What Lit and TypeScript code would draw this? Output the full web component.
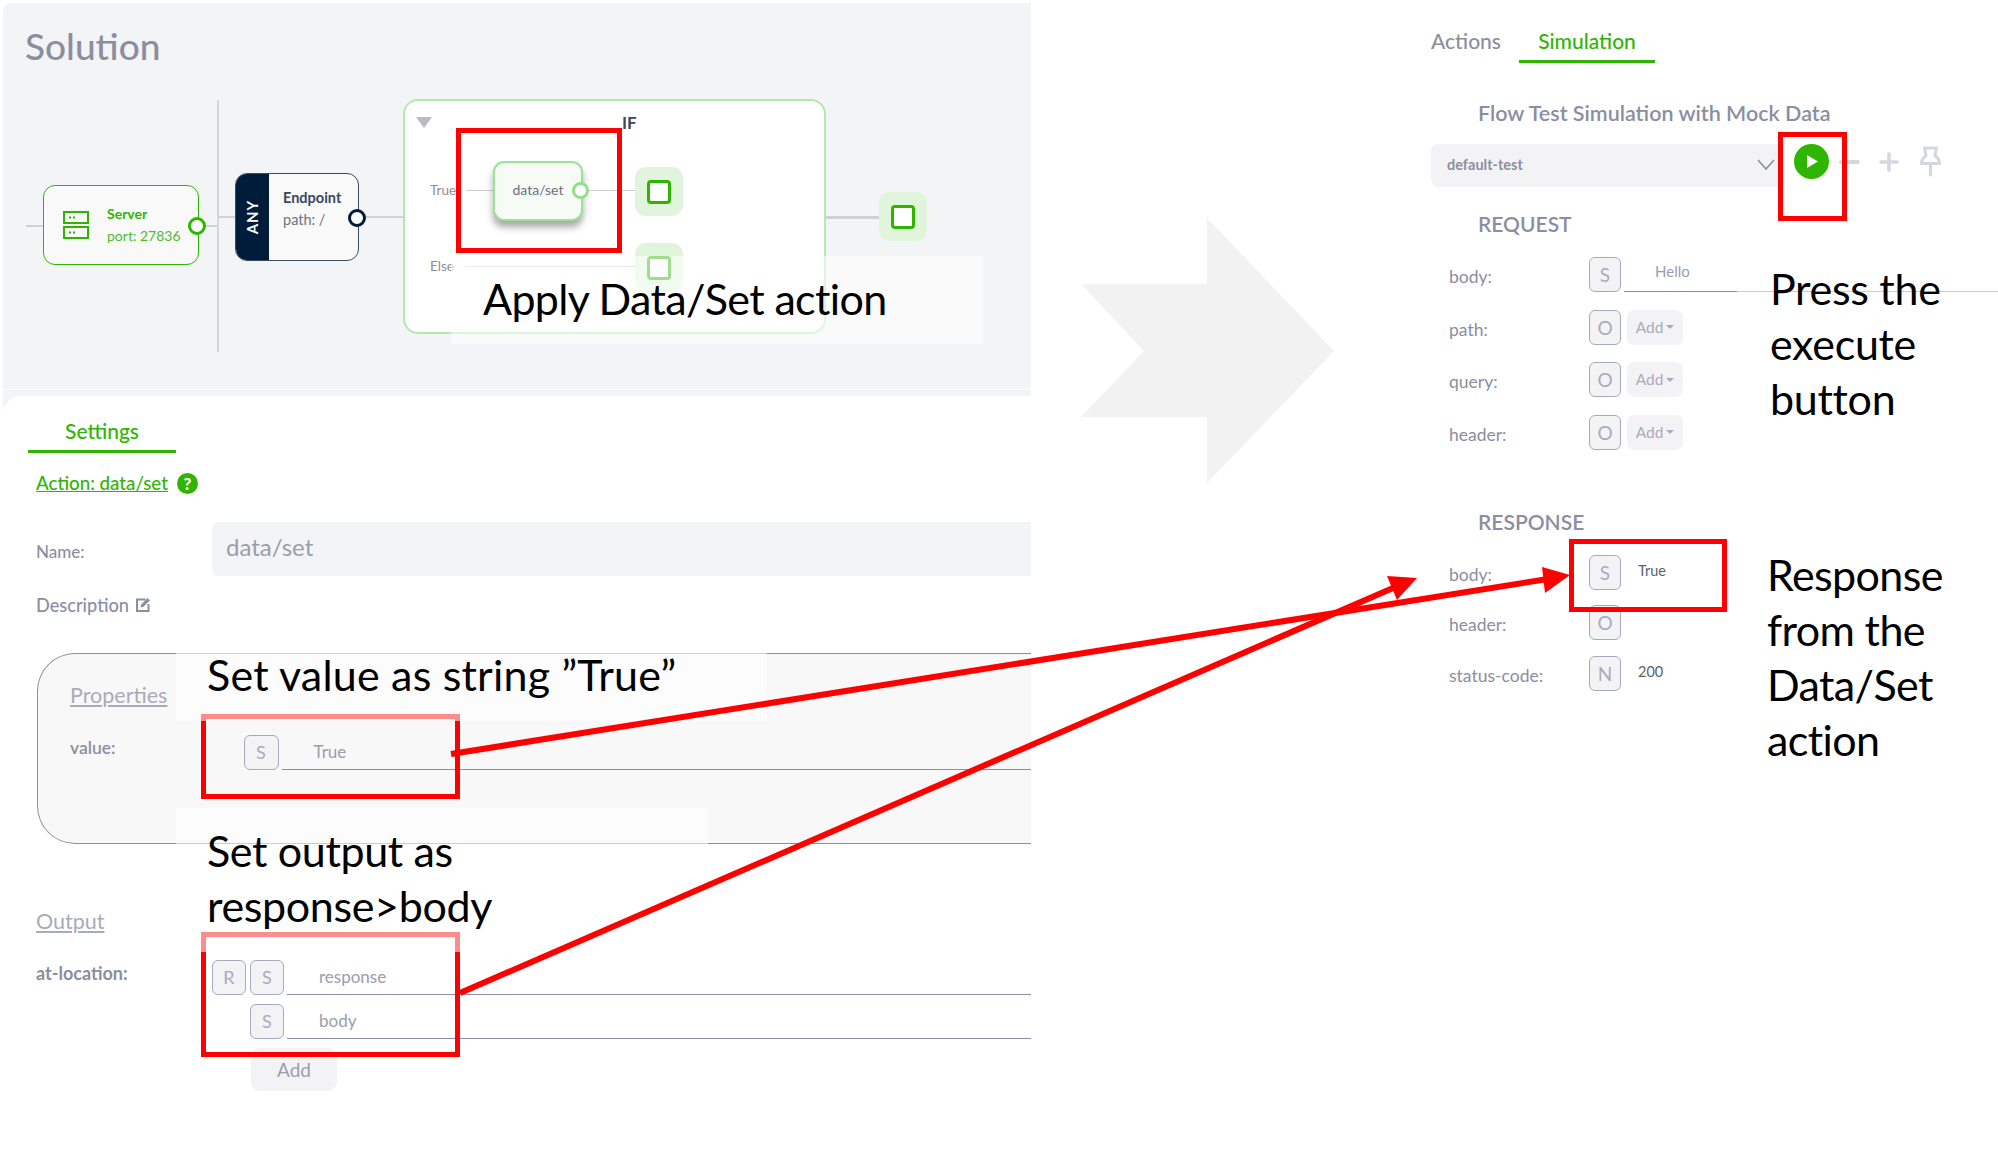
import { LitElement, html, css } from "lit";
import { customElement } from "lit/decorators.js";
import { styleMap } from "lit/directives/style-map.js";

type Box = { x: number; y: number; w: number; h: number };
type Note = { x: number; y: number; spacing: number; lines: string[] };

const at = (x: number, y: number) => styleMap({ left: `${x}px`, top: `${y}px` });
const box = (b: Box) =>
  styleMap({ left: `${b.x}px`, top: `${b.y}px`, width: `${b.w}px`, height: `${b.h}px` });

// canvas coordinates, relative to the flow canvas
const WIRES: Box[] = [
  { x: 23, y: 222, w: 20, h: 2 },
  { x: 196, y: 222, w: 19, h: 2 },
  { x: 214, y: 213, w: 20, h: 2 },
  { x: 358, y: 213, w: 43, h: 2 },
  { x: 823, y: 213, w: 53, h: 3 },
  { x: 463, y: 187, w: 28, h: 1 },
  { x: 580, y: 187, w: 53, h: 1 },
  { x: 462, y: 263, w: 171, h: 1 },
];
const SINKS = [
  { x: 632, y: 164 },
  { x: 632, y: 240 },
  { x: 876, y: 189 },
];

// annotations drawn over the screenshot, page coordinates
const RED_BOXES: Box[] = [
  { x: 456, y: 128, w: 166, h: 125 },
  { x: 201, y: 714, w: 259, h: 85 },
  { x: 201, y: 932, w: 259, h: 125 },
  { x: 1778, y: 132, w: 69, h: 89 },
  { x: 1569, y: 539, w: 158, h: 73 },
];
const VEILS: Box[] = [
  { x: 451, y: 256, w: 532, h: 88 },
  { x: 176, y: 653, w: 591, h: 68 },
  { x: 176, y: 808, w: 532, h: 144 },
  { x: 1737, y: 262, w: 261, h: 170 },
];
const NOTES: Note[] = [
  { x: 483, y: 271, spacing: -0.65, lines: ["Apply Data/Set action"] },
  { x: 207, y: 647, spacing: 0.2, lines: ["Set value as string ”True”"] },
  { x: 207, y: 823, spacing: -0.35, lines: ["Set output as", "response>body"] },
  { x: 1770, y: 261, spacing: -0.3, lines: ["Press the", "execute", "button"] },
  { x: 1767, y: 547, spacing: -0.6, lines: ["Response", "from the", "Data/Set", "action"] },
];

@customElement("flow-canvas")
class FlowCanvas extends LitElement {
  static styles = css`
    :host {
      display: block;
      position: relative;
      height: 386px;
      border-bottom: 1px solid #fbfbfc;
      font-family: Lato, sans-serif;
    }
    .title {
      position: absolute;
      left: 22px;
      top: 22px;
      font-size: 37px;
      line-height: 42px;
      font-weight: 500;
      color: #8b8e9f;
    }
    .wire {
      position: absolute;
      background: #cfd1d5;
    }
    .vline {
      position: absolute;
      left: 214px;
      top: 97px;
      width: 2px;
      height: 252px;
      background: #d5d6da;
    }
    .server {
      position: absolute;
      left: 40px;
      top: 182px;
      width: 156px;
      height: 80px;
      box-sizing: border-box;
      border: 1.5px solid #2fb500;
      border-radius: 12px;
      background: #f8f9f8;
      display: flex;
      align-items: center;
      gap: 18px;
      padding-left: 19px;
      color: #2fb500;
      font-size: 14px;
      line-height: 22px;
    }
    .server b {
      display: block;
      font-weight: 700;
    }
    .server span {
      opacity: 0.85;
    }
    .port {
      position: absolute;
      width: 12px;
      height: 12px;
      border-radius: 50%;
      background: #fff;
      border: 3px solid #2fb500;
    }
    .port.dark {
      border-color: #001c3b;
    }
    .port.light {
      width: 11px;
      height: 11px;
      border-color: #8fe087;
    }
    .endpoint {
      position: absolute;
      left: 232px;
      top: 170px;
      width: 124px;
      height: 88px;
      box-sizing: border-box;
      border: 1.5px solid #3a4a63;
      border-radius: 12px;
      background: #f8f9f8;
      display: flex;
      overflow: hidden;
      color: #3a4760;
      font-size: 14.5px;
      line-height: 22px;
    }
    .any {
      width: 33px;
      background: #001c3b;
      color: #fff;
      font-size: 15px;
      font-weight: 700;
      letter-spacing: 1px;
      display: flex;
      align-items: center;
      justify-content: center;
    }
    .any span {
      transform: rotate(-90deg);
    }
    .endpoint .info {
      padding: 13px 0 0 14px;
    }
    .endpoint b {
      display: block;
    }
    .endpoint .p {
      color: #6b7486;
    }
    .if-box {
      position: absolute;
      left: 400px;
      top: 96px;
      width: 423px;
      height: 235px;
      box-sizing: border-box;
      border: 2px solid #b3e9ad;
      border-radius: 15px;
      background: #fff;
    }
    .tri {
      position: absolute;
      left: 413px;
      top: 114px;
      width: 0;
      height: 0;
      border-left: 8px solid transparent;
      border-right: 8px solid transparent;
      border-top: 11px solid #b9bbc4;
    }
    .if-label {
      position: absolute;
      left: 619px;
      top: 110px;
      font-size: 17px;
      line-height: 20px;
      font-weight: 700;
      color: #3a4760;
    }
    .side {
      position: absolute;
      left: 427px;
      font-size: 13.5px;
      line-height: 16px;
      color: #8a8d9b;
    }
    .action {
      position: absolute;
      left: 490px;
      top: 158px;
      width: 90px;
      height: 60px;
      box-sizing: border-box;
      border: 2px solid #9be295;
      border-radius: 11px;
      background: #f6fbf5;
      box-shadow: 0 6px 7px rgba(60, 60, 60, 0.45);
      display: flex;
      align-items: center;
      justify-content: center;
      padding-bottom: 3px;
      font-size: 14px;
      color: #6c7080;
    }
    .sink {
      position: absolute;
      width: 48px;
      height: 49px;
      border-radius: 11px;
      background: #e1f5dd;
      display: flex;
      align-items: center;
      justify-content: center;
    }
    .sink i {
      display: block;
      width: 18px;
      height: 18px;
      border: 3px solid #2fb500;
      border-radius: 4px;
      background: #fff;
    }
  `;

  render() {
    return html`
      <div class="title">Solution</div>
      ${WIRES.slice(0, 5).map((w) => html`<div class="wire" style=${box(w)}></div>`)}
      <div class="vline"></div>

      <div class="server">
        <svg width="26" height="28" viewBox="0 0 26 28" fill="none" stroke="#2fb500" stroke-width="2">
          <rect x="1" y="1" width="24" height="11" />
          <rect x="1" y="16" width="24" height="11" />
          <path d="M6 6.500h2M10 6.500h2M6 21.500h2M10 21.500h2" />
        </svg>
        <div><b>Server</b><span>port: 27836</span></div>
      </div>
      <div class="port" style=${at(185, 214)}></div>

      <div class="endpoint">
        <div class="any"><span>ANY</span></div>
        <div class="info"><b>Endpoint</b><span class="p">path: /</span></div>
      </div>
      <div class="port dark" style=${at(345, 206)}></div>

      <div class="if-box"></div>
      <div class="tri"></div>
      <div class="if-label">IF</div>
      <div class="side" style=${at(427, 179)}>True</div>
      <div class="side" style=${at(427, 255)}>Else</div>
      ${WIRES.slice(5).map((w) => html`<div class="wire" style=${box(w)}></div>`)}
      <div class="action">data/set</div>
      <div class="port light" style=${at(569, 179)}></div>
      ${SINKS.map((s) => html`<div class="sink" style=${at(s.x, s.y)}><i></i></div>`)}
    `;
  }
}

@customElement("settings-panel")
class SettingsPanel extends LitElement {
  static styles = css`
    :host {
      display: block;
      height: 759px;
      margin-top: 6px;
      background: #fff;
      border-radius: 18px 0 0 0;
      font-family: Lato, sans-serif;
      color: #8b8e9f;
      font-size: 17px;
    }
    .tab {
      width: 148px;
      margin-left: 25px;
      padding-top: 20px;
      box-sizing: border-box;
      height: 57px;
      border-bottom: 3px solid #2fb500;
      text-align: center;
      color: #2fb500;
      font-size: 21px;
      line-height: 29px;
      font-weight: 500;
    }
    .action {
      margin: 18px 0 0 33px;
      display: flex;
      align-items: center;
      gap: 9px;
      height: 24px;
    }
    .action u {
      color: #2fb500;
      font-size: 18.700px;
      font-weight: 500;
    }
    .help {
      width: 21px;
      height: 21px;
      border-radius: 50%;
      background: #2fb500;
      color: #fff;
      font-size: 17px;
      font-weight: 900;
      line-height: 21px;
      text-align: center;
    }
    .name {
      display: flex;
      align-items: center;
      margin: 27px 0 0 33px;
    }
    .name label {
      width: 176px;
      padding-top: 4px;
      font-weight: 500;
    }
    .input {
      flex: 1;
      height: 54px;
      border-radius: 6px 0 0 6px;
      background: #f3f4f6;
      color: #9a9dad;
      font-size: 24px;
      line-height: 50px;
      padding-left: 14px;
    }
    .desc {
      margin: 17px 0 0 33px;
      display: flex;
      gap: 6px;
      height: 24px;
      align-items: center;
      font-size: 18.200px;
      font-weight: 500;
    }
    .props {
      margin: 36px 0 0 34px;
      height: 191px;
      box-sizing: border-box;
      border: 1.5px solid #8b8ea6;
      border-right: 0;
      border-radius: 38px 0 0 38px;
      background: #f8f8f9;
      padding: 28px 0 0 32px;
    }
    .link {
      display: block;
      width: max-content;
      font-size: 21.500px;
      line-height: 26px;
      color: #a9abbb;
      text-decoration: underline;
    }
    .value {
      display: flex;
      margin-top: 27px;
    }
    .value label {
      width: 173.500px;
      line-height: 26px;
      font-weight: 600;
      font-size: 17.500px;
    }
    .field {
      flex: 1;
      height: 35px;
      box-sizing: border-box;
      border-bottom: 1.5px solid #8b8ea6;
      margin-left: 3px;
      padding-left: 32px;
      line-height: 33px;
      color: #9a9dad;
      font-size: 17px;
    }
    .type {
      flex: none;
      box-sizing: border-box;
      width: 35px;
      height: 35px;
      border: 1.5px solid #a7aabd;
      border-radius: 6px;
      background: #f3f3f6;
      color: #a9abbb;
      font-size: 18px;
      line-height: 33px;
      text-align: center;
    }
    .output {
      margin: 64px 0 0 33px;
      height: 28px;
    }
    .loc {
      display: grid;
      grid-template-columns: 176px 38px 1fr;
      grid-auto-rows: 35px;
      row-gap: 9px;
      margin: 24px 0 0 33px;
    }
    .loc label {
      font-weight: 700;
      font-size: 18px;
      color: #8b8e9f;
      line-height: 26px;
    }
    .loc .first {
      grid-column: 2;
      width: 34px;
    }
    .cell {
      display: flex;
      grid-column: 3;
    }
    .cell .type {
      width: 34px;
    }
    .spacer {
      grid-column: 1 / 3;
    }
    .add {
      margin: 9px 0 0 248px;
      width: 86px;
      height: 43px;
      border-radius: 9px;
      background: #f3f3f6;
      color: #9a9dad;
      font-size: 19px;
      line-height: 43px;
      text-align: center;
    }
  `;

  render() {
    return html`
      <div class="tab">Settings</div>
      <div class="action"><u>Action: data/set</u><span class="help">?</span></div>
      <div class="name">
        <label>Name:</label>
        <div class="input">data/set</div>
      </div>
      <div class="desc">
        Description
        <svg width="16" height="16" viewBox="0 0 16 16" fill="none">
          <path d="M10.500 2.500H2v11.500h11.500V7" stroke="#8b8e9f" stroke-width="2" />
          <path d="M5.500 10.500l.7-3L12.500 1l2.500 2.500-6.500 6.300z" fill="#8b8e9f" />
        </svg>
      </div>
      <div class="props">
        <span class="link">Properties</span>
        <div class="value">
          <label>value:</label>
          <div class="type">S</div>
          <div class="field">True</div>
        </div>
      </div>
      <div class="output"><span class="link">Output</span></div>
      <div class="loc">
        <label>at-location:</label>
        <div class="type first">R</div>
        <div class="cell"><div class="type">S</div><div class="field">response</div></div>
        <div class="spacer"></div>
        <div class="cell"><div class="type">S</div><div class="field">body</div></div>
      </div>
      <div class="add">Add</div>
    `;
  }
}

@customElement("simulation-panel")
class SimulationPanel extends LitElement {
  static styles = css`
    :host {
      display: block;
      font-family: Lato, sans-serif;
      color: #8b8e9f;
      font-size: 17px;
    }
    .tabs {
      display: flex;
      height: 63px;
      box-sizing: border-box;
    }
    .tab {
      padding-top: 26px;
      font-size: 21px;
      line-height: 29px;
      font-weight: 500;
    }
    .tab.on {
      margin-left: 18px;
      width: 136px;
      text-align: center;
      color: #2fb500;
      border-bottom: 3px solid #2fb500;
      box-sizing: border-box;
    }
    h2 {
      margin: 36px 0 0 47px;
      font-size: 21.500px;
      line-height: 28px;
      font-weight: 600;
      color: #8b8e9f;
    }
    .bar {
      display: flex;
      align-items: center;
      margin-top: 17px;
      height: 43px;
    }
    .select {
      width: 347px;
      height: 43px;
      box-sizing: border-box;
      border-radius: 8px 0 0 8px;
      background: #f3f3f6;
      display: flex;
      align-items: center;
      justify-content: space-between;
      padding: 0 3px 2px 16px;
      font-size: 14.500px;
      font-weight: 700;
    }
    .tools {
      display: flex;
      align-items: center;
      margin-top: -8px;
    }
    .play {
      margin-left: 16px;
      width: 35px;
      height: 35px;
    }
    .minus {
      margin-left: 10px;
    }
    .plus {
      margin-left: 19px;
    }
    .pin {
      margin-left: 21px;
    }
    h3 {
      margin: 23px 0 0 47px;
      font-size: 21px;
      line-height: 28px;
      font-weight: 600;
      color: #8b8e9f;
    }
    h3.response {
      margin-top: 58px;
    }
    .rows {
      display: grid;
      grid-template-columns: 140px 1fr;
      margin: 19px 0 0 18px;
    }
    .row-label {
      line-height: 26px;
      padding-top: 7px;
      font-size: 17.500px;
    }
    .row {
      display: flex;
      align-items: flex-start;
    }
    .type {
      flex: none;
      box-sizing: border-box;
      width: 32px;
      height: 35px;
      border: 1.5px solid #a7aabd;
      border-radius: 6px;
      background: #f3f3f6;
      color: #a9abbb;
      font-size: 19px;
      line-height: 33px;
      text-align: center;
    }
    .hello {
      flex: 1;
      height: 35px;
      margin-left: 3px;
      box-sizing: border-box;
      border-bottom: 1.5px solid #8b8ea6;
      padding-left: 31px;
      color: #9a9dad;
      font-size: 15px;
      line-height: 29px;
    }
    .add {
      margin-left: 6px;
      width: 56px;
      height: 35px;
      border-radius: 7px;
      background: #f3f3f6;
      color: #a9abbb;
      font-size: 15.500px;
      line-height: 35px;
      display: flex;
      align-items: center;
      justify-content: center;
      gap: 3px;
    }
    .add i {
      width: 0;
      height: 0;
      border-left: 4px solid transparent;
      border-right: 4px solid transparent;
      border-top: 4px solid #a9abbb;
    }
    .val {
      margin-left: 17px;
      color: #5d5f68;
      font-size: 14.500px;
      line-height: 31px;
    }
    .gap {
      grid-column: 1 / 3;
      height: 17.500px;
    }
    .gap.sm {
      height: 15.500px;
    }
  `;

  render() {
    return html`
      <div class="tabs">
        <div class="tab">Actions</div>
        <div class="tab on">Simulation</div>
      </div>
      <h2>Flow Test Simulation with Mock Data</h2>
      <div class="bar">
        <div class="select">
          default-test
          <svg width="18" height="12" viewBox="0 0 18 12" fill="none" stroke="#8b8e9f" stroke-width="1.600"><path d="M1 1l8 9 8-9" /></svg>
        </div>
        <div class="tools">
          <svg class="play" viewBox="0 0 35 35">
            <circle cx="17.500" cy="17.500" r="17.500" fill="#2fb500" />
            <path d="M13 11l11 6.500-11 6.500z" fill="#fff" />
          </svg>
          <svg class="minus" width="21" height="6" viewBox="0 0 21 6"><path d="M2 3h17" stroke="#d5d7e0" stroke-width="4" stroke-linecap="round" /></svg>
          <svg class="plus" width="20" height="20" viewBox="0 0 20 20"><path d="M10 2v16M2 10h16" stroke="#d5d7e0" stroke-width="3.600" stroke-linecap="round" /></svg>
          <svg class="pin" width="21" height="31" viewBox="0 0 21 31" fill="none" stroke="#d5d7e0" stroke-width="3.200" stroke-linecap="round" stroke-linejoin="round"><path d="M4.500 2h12l-1.500 8c2.500 1 4 3 4.500 7.500H1.500C2 13 3.500 11 6 10zM10.500 18v11" /></svg>
        </div>
      </div>
      <h3>REQUEST</h3>
      <div class="rows">
        <div class="row-label">body:</div>
        <div class="row"><div class="type">S</div><div class="hello">Hello</div></div>
        <div class="gap"></div>
        ${["path:", "query:", "header:"].map(
          (n, i) => html`
            <div class="row-label">${n}</div>
            <div class="row"><div class="type">O</div><div class="add">Add<i></i></div></div>
            ${i < 2 ? html`<div class="gap"></div>` : ""}
          `,
        )}
      </div>
      <h3 class="response">RESPONSE</h3>
      <div class="rows">
        <div class="row-label">body:</div>
        <div class="row"><div class="type">S</div><div class="val">True</div></div>
        <div class="gap sm"></div>
        <div class="row-label">header:</div>
        <div class="row"><div class="type">O</div></div>
        <div class="gap sm"></div>
        <div class="row-label">status-code:</div>
        <div class="row"><div class="type">N</div><div class="val">200</div></div>
      </div>
    `;
  }
}

@customElement("app-root")
class AppRoot extends LitElement {
  static styles = css`
    :host {
      display: block;
      position: relative;
      width: 1998px;
      height: 1155px;
      overflow: hidden;
      background: #fff;
    }
    .page {
      display: flex;
      padding: 3px 0 0 3px;
    }
    .left {
      width: 1028px;
      flex: none;
      background: #f3f4f6;
      border-radius: 8px 0 0 0;
    }
    .right {
      width: 567px;
      margin: -3px 0 0 400px;
      flex: none;
    }
    .chevron,
    .arrows {
      position: absolute;
      left: 0;
      top: 0;
    }
    .veil {
      position: absolute;
      background: rgba(255, 255, 255, 0.55);
    }
    .redbox {
      position: absolute;
      box-sizing: border-box;
      border: 5px solid #f00;
    }
    .note {
      position: absolute;
      font-family: Lato, sans-serif;
      font-size: 43px;
      line-height: 55px;
      color: #000;
      white-space: nowrap;
    }
    .note div {
      height: 55px;
    }
  `;

  render() {
    return html`
      <div class="page">
        <div class="left">
          <flow-canvas></flow-canvas>
          <settings-panel></settings-panel>
        </div>
        <div class="right"><simulation-panel></simulation-panel></div>
      </div>

      <svg class="chevron" width="1998" height="1155" viewBox="0 0 1998 1155">
        <polygon points="1081,284 1207,284 1207,218 1334,351 1207,483 1207,417 1081,417 1144,351" fill="#f2f2f2" />
      </svg>

      ${RED_BOXES.map((b) => html`<div class="redbox" style=${box(b)}></div>`)}
      ${VEILS.map((b) => html`<div class="veil" style=${box(b)}></div>`)}
      ${NOTES.map(
        (n) => html`<div
          class="note"
          style=${styleMap({ left: `${n.x}px`, top: `${n.y}px`, letterSpacing: `${n.spacing}px` })}
        >
          ${n.lines.map((l) => html`<div>${l}</div>`)}
        </div>`,
      )}

      <svg class="arrows" width="1998" height="1155" viewBox="0 0 1998 1155">
        <path d="M451 754L1548 579" stroke="#f00" stroke-width="6" fill="none" />
        <polygon points="1570,575 1542,567 1545,593" fill="#f00" />
        <path d="M460 993L1393 588" stroke="#f00" stroke-width="6" fill="none" />
        <polygon points="1417,578 1387,576 1397,600" fill="#f00" />
      </svg>
    `;
  }
}
